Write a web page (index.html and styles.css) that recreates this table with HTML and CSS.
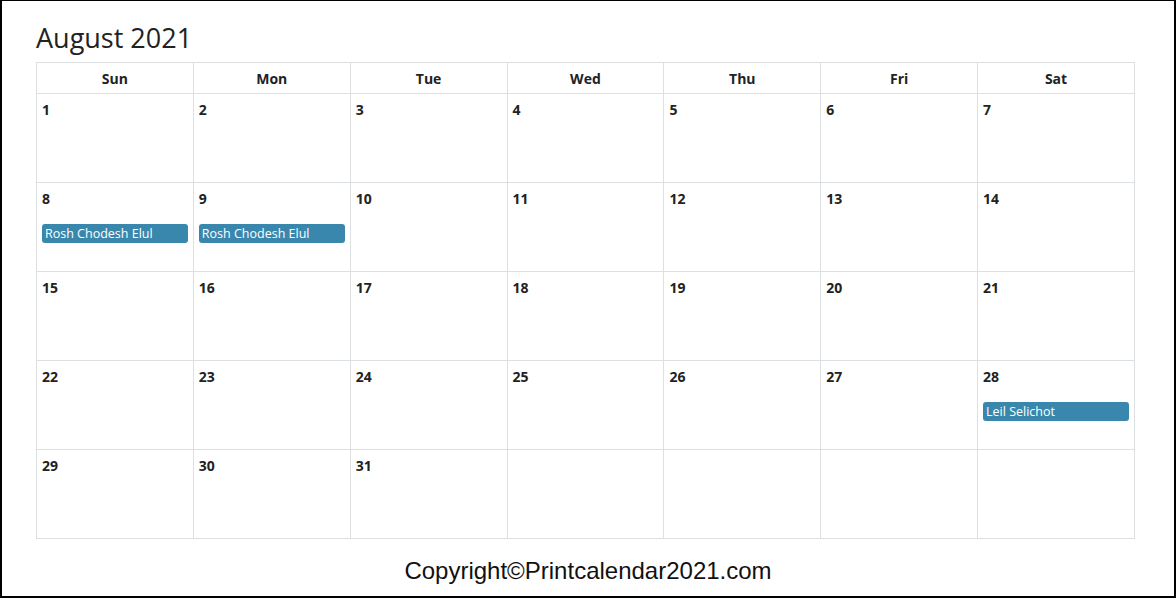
FILE: index.html
```
<!DOCTYPE html>
<html>
<head>
<meta charset="utf-8">
<link rel="stylesheet" href="styles.css">
</head>
<body>
<div class="frame">
  <h1 class="title">August 2021</h1>
  <table class="cal">
    <thead>
      <tr><th>Sun</th><th>Mon</th><th>Tue</th><th>Wed</th><th>Thu</th><th>Fri</th><th>Sat</th></tr>
    </thead>
    <tbody>
      <tr><td><span class="num">1</span></td><td><span class="num">2</span></td><td><span class="num">3</span></td><td><span class="num">4</span></td><td><span class="num">5</span></td><td><span class="num">6</span></td><td><span class="num">7</span></td></tr>
      <tr><td><span class="num">8</span><div class="ev">Rosh Chodesh Elul</div></td><td><span class="num">9</span><div class="ev">Rosh Chodesh Elul</div></td><td><span class="num">10</span></td><td><span class="num">11</span></td><td><span class="num">12</span></td><td><span class="num">13</span></td><td><span class="num">14</span></td></tr>
      <tr><td><span class="num">15</span></td><td><span class="num">16</span></td><td><span class="num">17</span></td><td><span class="num">18</span></td><td><span class="num">19</span></td><td><span class="num">20</span></td><td><span class="num">21</span></td></tr>
      <tr><td><span class="num">22</span></td><td><span class="num">23</span></td><td><span class="num">24</span></td><td><span class="num">25</span></td><td><span class="num">26</span></td><td><span class="num">27</span></td><td><span class="num">28</span><div class="ev">Leil Selichot</div></td></tr>
      <tr><td><span class="num">29</span></td><td><span class="num">30</span></td><td><span class="num">31</span></td><td></td><td></td><td></td><td></td></tr>
    </tbody>
  </table>
  <div class="copy">Copyright©Printcalendar2021.com</div>
</div>
</body>
</html>
```
FILE: styles.css
```
html, body {
  margin: 0;
  padding: 0;
  background: #fff;
}
.frame {
  width: 1176px;
  height: 598px;
  box-sizing: border-box;
  border: 2px solid #000;
  border-top-width: 1px;
  padding: 20px 0 0 34px;
  display: flex;
  flex-direction: column;
}
.title {
  margin: 0 0 7px 0;
  font-family: "Open Sans", "Noto Sans", sans-serif;
  font-weight: 400;
  font-size: 27px;
  line-height: 34px;
  color: #222;
}
.cal {
  width: 1099px;
  border-collapse: collapse;
  table-layout: fixed;
  font-family: "Open Sans", "Noto Sans", sans-serif;
  color: #222;
}
.cal th, .cal td {
  border: 1px solid #dde0e3;
  padding: 0;
}
.cal th {
  height: 30px;
  font-size: 14px;
  font-weight: 700;
  text-align: center;
}
.cal td {
  height: 88px;
  vertical-align: top;
}
.num {
  display: block;
  font-size: 14px;
  font-weight: 700;
  line-height: 18px;
  padding: 7px 0 0 5px;
}
.ev {
  margin: 16px 5px 0 5px;
  height: 19px;
  line-height: 19px;
  background: #3a87ad;
  color: #fff;
  border-radius: 3px;
  font-size: 12.5px;
  padding-left: 3px;
  white-space: nowrap;
  overflow: hidden;
}
.copy {
  margin: 18px 0 0 -34px;
  text-align: center;
  font-family: "Liberation Sans", Arial, sans-serif;
  font-size: 24px;
  line-height: 28px;
  color: #111;
}
```
